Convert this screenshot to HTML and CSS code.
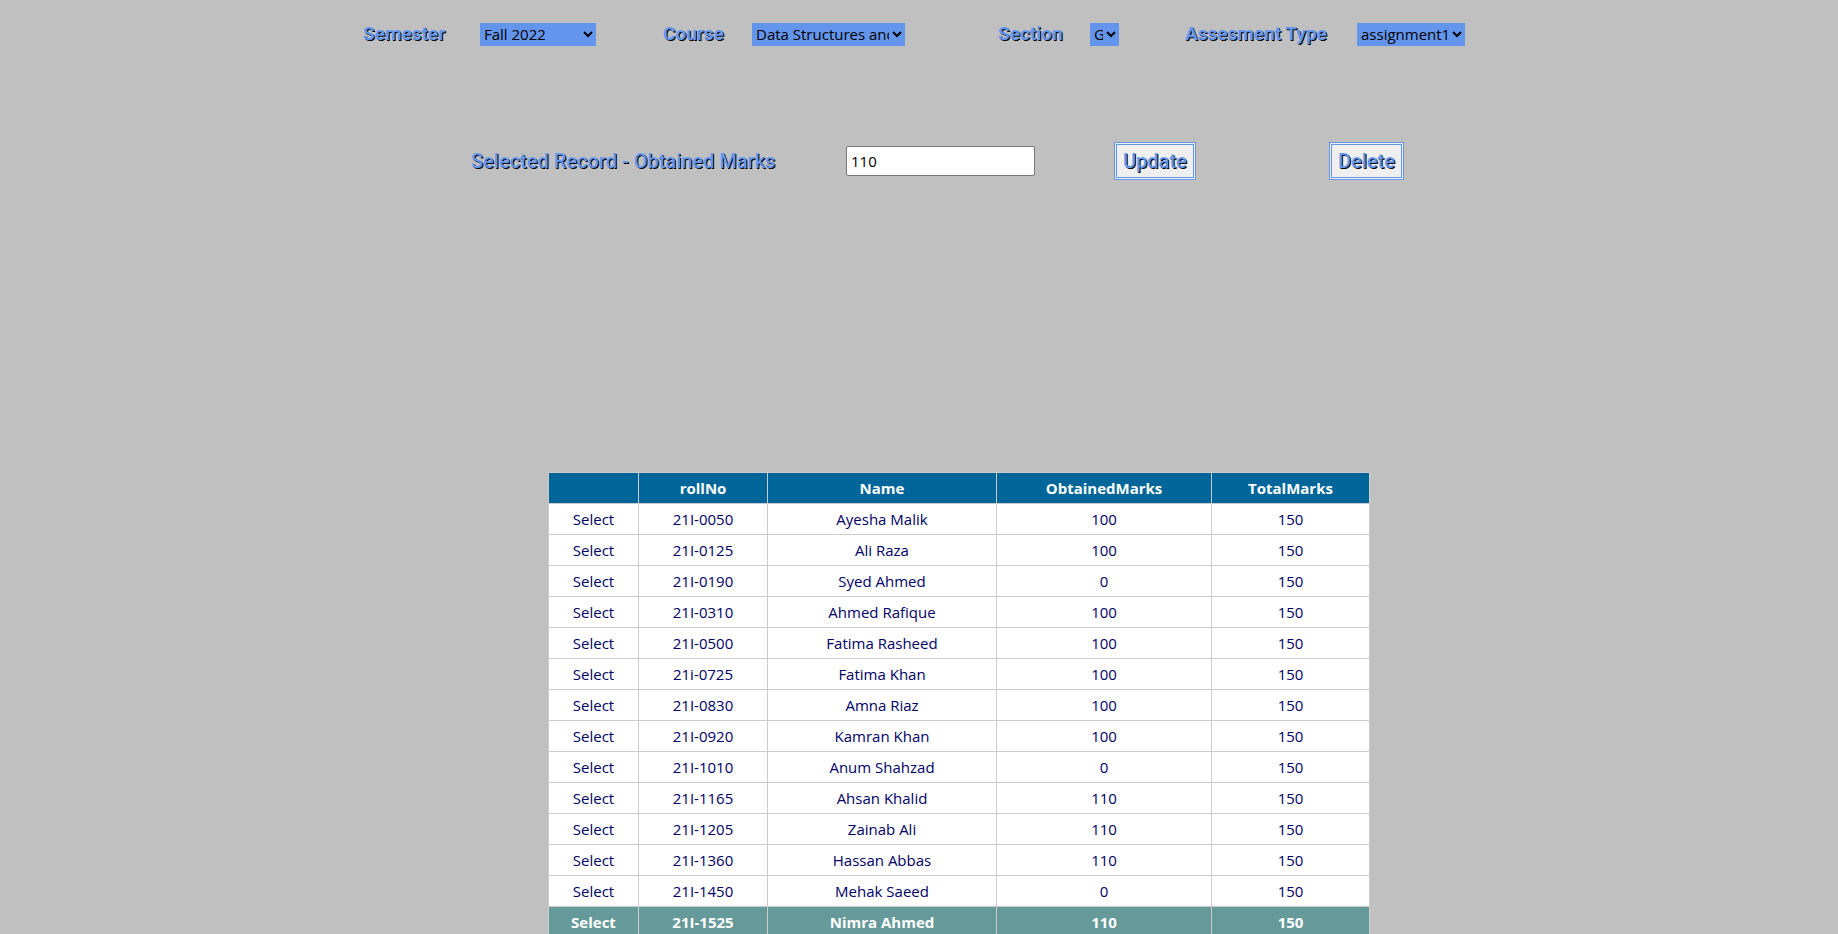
FILE: index.html
```html
<!DOCTYPE html>
<html lang="en">
<head>
<meta charset="utf-8">
<title>Marks</title>
<link rel="stylesheet" href="styles.css">
</head>
<body>
<form class="page">
  <div class="filters">
    <label class="label label-strong" for="semester">Semester</label>
    <select class="picker" id="semester"><option>Fall 2022</option></select>
    <label class="label label-strong" for="course">Course</label>
    <select class="picker" id="course"><option>Data Structures and Algorithms</option></select>
    <label class="label label-strong" for="section">Section</label>
    <select class="picker" id="section"><option>G</option></select>
    <label class="label label-strong" for="assessment">Assesment Type</label>
    <select class="picker" id="assessment"><option>assignment1</option></select>
  </div>
  <div class="record">
    <label class="label" for="marks">Selected Record - Obtained Marks</label>
    <input class="marks" id="marks" type="text" value="110">
    <button class="label action" type="button">Update</button>
    <button class="label action" type="button">Delete</button>
  </div>
  <div class="results">
    <table class="grid">
      <colgroup><col class="c-select"><col class="c-roll"><col class="c-name"><col class="c-obtained"><col class="c-total"></colgroup>
      <thead>
        <tr><th></th><th>rollNo</th><th>Name</th><th>ObtainedMarks</th><th>TotalMarks</th></tr>
      </thead>
      <tbody>
        <tr><td><a href="#">Select</a></td><td>21I-0050</td><td>Ayesha Malik</td><td>100</td><td>150</td></tr>
        <tr><td><a href="#">Select</a></td><td>21I-0125</td><td>Ali Raza</td><td>100</td><td>150</td></tr>
        <tr><td><a href="#">Select</a></td><td>21I-0190</td><td>Syed Ahmed</td><td>0</td><td>150</td></tr>
        <tr><td><a href="#">Select</a></td><td>21I-0310</td><td>Ahmed Rafique</td><td>100</td><td>150</td></tr>
        <tr><td><a href="#">Select</a></td><td>21I-0500</td><td>Fatima Rasheed</td><td>100</td><td>150</td></tr>
        <tr><td><a href="#">Select</a></td><td>21i-0725</td><td>Fatima Khan</td><td>100</td><td>150</td></tr>
        <tr><td><a href="#">Select</a></td><td>21I-0830</td><td>Amna Riaz</td><td>100</td><td>150</td></tr>
        <tr><td><a href="#">Select</a></td><td>21I-0920</td><td>Kamran Khan</td><td>100</td><td>150</td></tr>
        <tr><td><a href="#">Select</a></td><td>21I-1010</td><td>Anum Shahzad</td><td>0</td><td>150</td></tr>
        <tr><td><a href="#">Select</a></td><td>21I-1165</td><td>Ahsan Khalid</td><td>110</td><td>150</td></tr>
        <tr><td><a href="#">Select</a></td><td>21I-1205</td><td>Zainab Ali</td><td>110</td><td>150</td></tr>
        <tr><td><a href="#">Select</a></td><td>21I-1360</td><td>Hassan Abbas</td><td>110</td><td>150</td></tr>
        <tr><td><a href="#">Select</a></td><td>21I-1450</td><td>Mehak Saeed</td><td>0</td><td>150</td></tr>
        <tr class="selected"><td><a href="#">Select</a></td><td>21I-1525</td><td>Nimra Ahmed</td><td>110</td><td>150</td></tr>
      </tbody>
    </table>
  </div>
</form>
</body>
</html>
```
FILE: styles.css
```css
* {
  box-sizing: border-box;
}

html {
  scrollbar-width: none;
}

body {
  margin: 0;
  background: #c0c0c0;
  color: #000;
  font-family: "Segoe UI", "Open Sans", sans-serif;
  font-size: 15px;
}

.page {
  padding-top: 19px;
}

.label {
  color: #6495ed;
  font-family: Bahnschrift, Roboto, sans-serif;
  font-size: 20px;
  font-weight: 500;
  line-height: 30px;
  text-shadow: 1px 1px #000;
  white-space: nowrap;
}

.label-strong {
  font-size: 19px;
  font-weight: 700;
}

.filters {
  display: grid;
  grid-template-columns: 117px 183px 89px 246px 92px 95px 172px 108px;
  justify-content: center;
  align-items: center;
  padding-right: 10px;
}

.picker {
  height: 23px;
  padding: 0;
  border: 0;
  border-radius: 0;
  background-color: #6495ed;
  color: #000;
  font-family: inherit;
  font-size: 15px;
}

#semester {
  width: 116px;
}

#course {
  width: 153px;
}

#section {
  width: 29px;
}

#assessment {
  width: 108px;
}

.record {
  display: grid;
  grid-template-columns: 375px 268px 215px 76px;
  justify-content: center;
  align-items: center;
  margin-top: 93px;
  padding-left: 38px;
}

.marks {
  width: 189px;
  height: 30px;
  padding: 1px 4px;
  border: 1px solid #767676;
  border-radius: 2px;
  background: #fff;
  color: #000;
  font-family: inherit;
  font-size: 15px;
}

.action {
  justify-self: start;
  padding: 1px 6px;
  border: 3px double #6495ed;
  background: #efefef;
}

.results {
  display: flex;
  justify-content: center;
  margin-top: 292px;
  padding-left: 80px;
}

.grid {
  width: 822px;
  table-layout: fixed;
  border-collapse: collapse;
  border: 1px solid #ccc;
  background: #fff;
  color: #000066;
  line-height: 22px;
  text-align: center;
}

.grid th,
.grid td {
  padding: 4px;
  border: 1px solid #ccc;
}

.grid th {
  height: 31px;
  background: #006699;
  color: #fff;
  font-weight: 700;
}

.grid a {
  color: inherit;
  text-decoration: none;
}

.grid .selected {
  background: #669999;
  color: #fff;
  font-weight: 700;
}

.c-select {
  width: 90px;
}

.c-roll {
  width: 129px;
}

.c-name {
  width: 229px;
}

.c-obtained {
  width: 215px;
}

.c-total {
  width: 158px;
}
```
